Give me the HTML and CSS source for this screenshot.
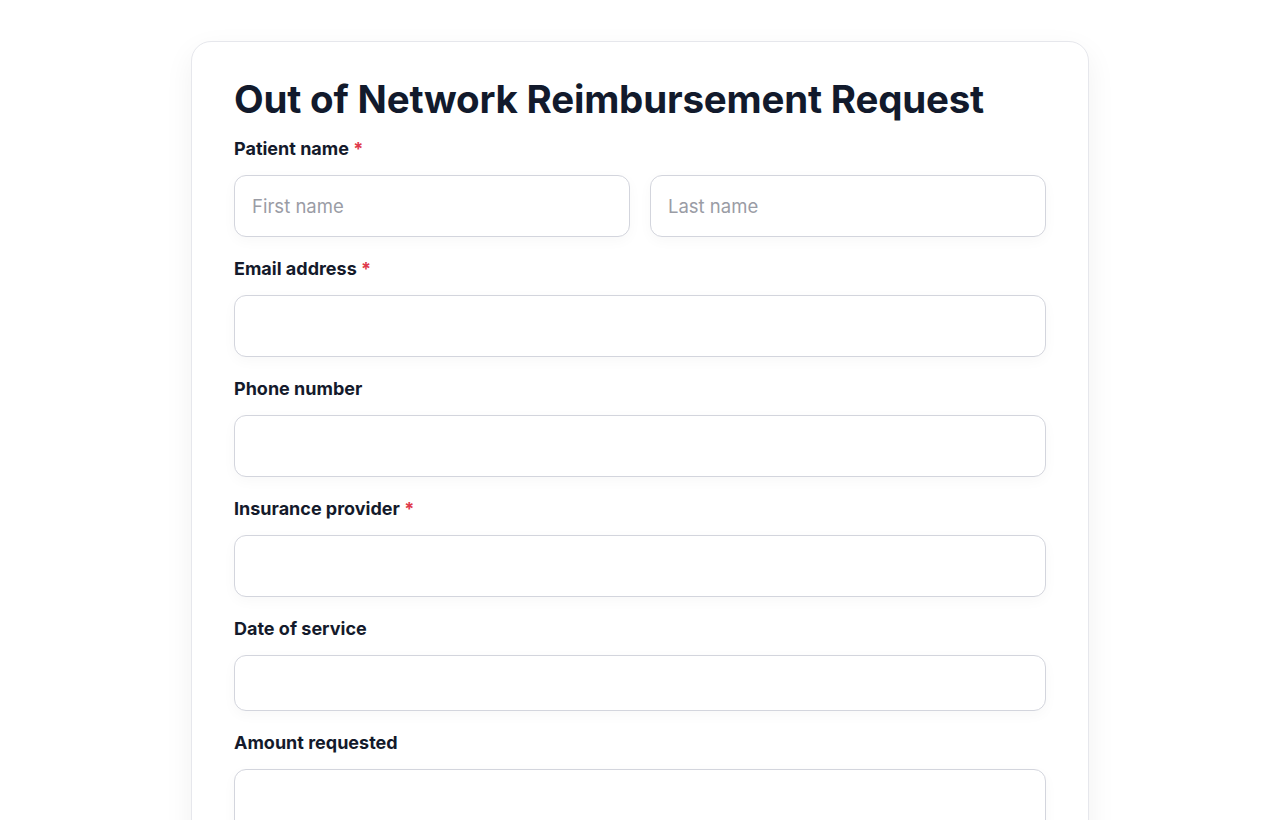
FILE: index.html
```html
<!DOCTYPE html>
<html lang="en">
<head>
    <meta charset="UTF-8">
    <title>Out of Network Reimbursement Request</title>
    <link rel="stylesheet" href="styles.css">
</head>
<body>
    <div class="page">
        <form class="card">
            <h1 class="title">Out of Network Reimbursement Request</h1>

            <div class="field">
                <label class="label">Patient name <span class="req">*</span></label>
                <div class="row">
                    <input class="input" type="text" placeholder="First name">
                    <input class="input" type="text" placeholder="Last name">
                </div>
            </div>

            <div class="field">
                <label class="label">Email address <span class="req">*</span></label>
                <input class="input" type="email">
            </div>

            <div class="field">
                <label class="label">Phone number</label>
                <input class="input" type="tel">
            </div>

            <div class="field">
                <label class="label">Insurance provider <span class="req">*</span></label>
                <input class="input" type="text">
            </div>

            <div class="field">
                <label class="label">Date of service</label>
                <input class="input input-date" type="text">
            </div>

            <div class="field">
                <label class="label">Amount requested</label>
                <input class="input input-tall" type="text">
            </div>
        </form>
    </div>
</body>
</html>
```

FILE: styles.css
```css
body, html {
    margin: 0;
    padding: 0;
    background: #ffffff;
}

body {
    font-family: "Inter", "Liberation Sans", sans-serif;
    color: #141a2b;
}

.page {
    display: flex;
    justify-content: center;
    padding-top: 41px;
}

.card {
    width: 812px;
    padding: 35px 42px 40px;
    background: #ffffff;
    border: 1px solid #e6e7ec;
    border-radius: 20px;
    box-shadow: 0 10px 30px rgba(15, 23, 42, 0.06);
    display: flex;
    flex-direction: column;
    gap: 20px;
}

.title {
    margin: 0 0 -4px;
    font-size: 38.5px;
    line-height: 44px;
    font-weight: 700;
    letter-spacing: -0.2px;
    color: #121a2c;
}

.field {
    display: flex;
    flex-direction: column;
    gap: 14px;
}

.label {
    font-size: 18px;
    line-height: 24px;
    font-weight: 650;
    color: #141a2b;
}

.req {
    color: #e0394b;
}

.row {
    display: flex;
    gap: 20px;
}

.row .input {
    flex: 1;
    min-width: 0;
}

.input {
    box-sizing: border-box;
    height: 62px;
    padding: 0 17px;
    border: 1px solid #d3d5dd;
    border-radius: 12px;
    font-family: inherit;
    font-size: 18.5px;
    color: #141a2b;
    background: #ffffff;
    box-shadow: 0 4px 14px rgba(15, 23, 42, 0.03);
    outline: none;
}

.input::placeholder {
    color: #9a9ca5;
}

.input-date {
    height: 56px;
}

.input-tall {
    height: 120px;
}
```
